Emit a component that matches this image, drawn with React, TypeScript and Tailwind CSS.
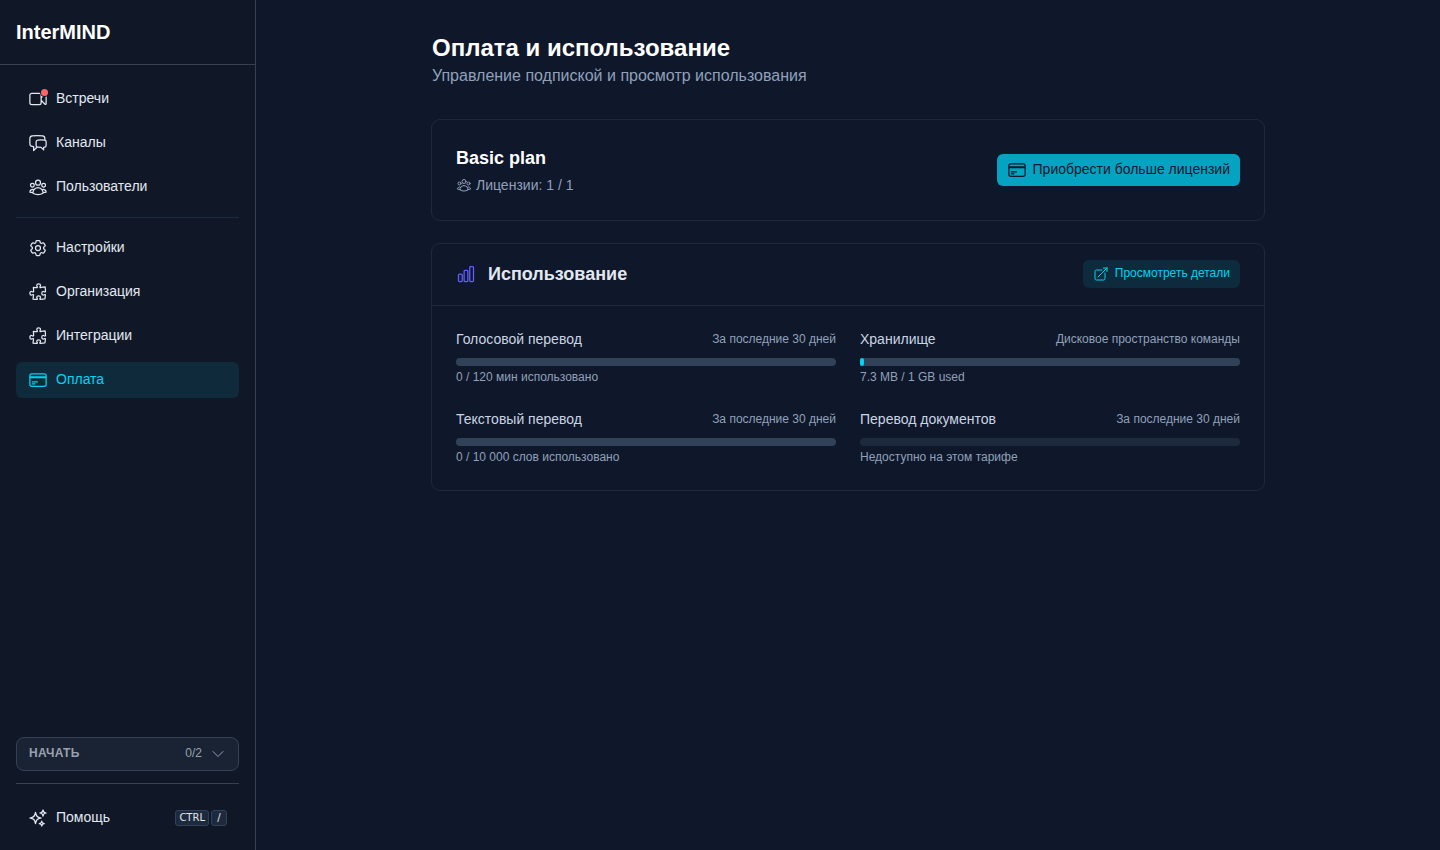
import type { ComponentType } from "react"
import clsx from "clsx"
import {
  HiOutlineArrowTopRightOnSquare,
  HiOutlineChartBar,
  HiOutlineChatBubbleLeftRight,
  HiOutlineChevronDown,
  HiOutlineCog6Tooth,
  HiOutlineCreditCard,
  HiOutlinePuzzlePiece,
  HiOutlineSparkles,
  HiOutlineUserGroup,
  HiOutlineVideoCamera,
} from "react-icons/hi2"

interface NavItem {
  label: string
  icon: ComponentType<{ className?: string }>
  active?: boolean
  dot?: boolean
}

interface Usage {
  title: string
  period: string
  note: string
  percent: number
  disabled?: boolean
}

const mainNav: NavItem[] = [
  { label: "Встречи", icon: HiOutlineVideoCamera, dot: true },
  { label: "Каналы", icon: HiOutlineChatBubbleLeftRight },
  { label: "Пользователи", icon: HiOutlineUserGroup },
]

const settingsNav: NavItem[] = [
  { label: "Настройки", icon: HiOutlineCog6Tooth },
  { label: "Организация", icon: HiOutlinePuzzlePiece },
  { label: "Интеграции", icon: HiOutlinePuzzlePiece },
  { label: "Оплата", icon: HiOutlineCreditCard, active: true },
]

const usage: Usage[] = [
  { title: "Голосовой перевод", period: "За последние 30 дней", note: "0 / 120 мин использовано", percent: 0 },
  { title: "Хранилище", period: "Дисковое пространство команды", note: "7.3 MB / 1 GB used", percent: 1 },
  { title: "Текстовый перевод", period: "За последние 30 дней", note: "0 / 10 000 слов использовано", percent: 0 },
  { title: "Перевод документов", period: "За последние 30 дней", note: "Недоступно на этом тарифе", percent: 0, disabled: true },
]

function NavList({ items }: { items: NavItem[] }) {
  return (
    <ul className="flex flex-col gap-2">
      {items.map(({ label, icon: Icon, active, dot }) => (
        <li key={label}>
          <a
            className={clsx(
              "flex h-9 items-center gap-2 rounded-md px-3 text-sm",
              active ? "bg-[#0e2a3b] text-cyan-400" : "text-slate-200"
            )}
          >
            <span className="relative">
              <Icon className="size-5" />
              {dot && <span className="absolute right-0 top-0 size-[7px] rounded-full bg-red-400 ring-1 ring-slate-900" />}
            </span>
            <span className="pb-0.5">{label}</span>
          </a>
        </li>
      ))}
    </ul>
  )
}

function Sidebar() {
  return (
    <aside className="flex w-64 shrink-0 flex-col border-r border-gray-700 bg-gray-900">
      <div className="flex h-[65px] items-center border-b border-gray-700 px-4">
        <span className="text-xl font-bold text-white">InterMIND</span>
      </div>

      <nav className="flex-1 px-4 pt-4">
        <NavList items={mainNav} />
        <div className="my-3 border-t border-slate-800" />
        <NavList items={settingsNav} />
      </nav>

      <div className="px-4">
        <button className="flex h-[34px] w-full items-center rounded-lg border border-gray-700 bg-[#192333] px-3 text-xs text-gray-400">
          <span className="pb-0.5 font-semibold tracking-wide">НАЧАТЬ</span>
          <span className="ml-auto mr-2 pb-0.5">0/2</span>
          <HiOutlineChevronDown className="size-4 text-slate-400" />
        </button>
        <div className="mt-3 border-t border-gray-700" />
        <div className="mb-3.5 mt-4 flex h-9 items-center gap-2 px-3 text-sm text-slate-200">
          <HiOutlineSparkles className="size-5" />
          <span className="pb-0.5">Помощь</span>
          <span className="ml-auto flex gap-0.5 font-['DejaVu_Sans'] text-[10px] leading-none">
            <kbd className="flex h-4 items-center rounded-[3px] border border-slate-700 bg-slate-800 px-[3px] font-[inherit]">CTRL</kbd>
            <kbd className="flex h-4 w-4 items-center justify-center rounded-[3px] border border-slate-700 bg-slate-800 font-[inherit]">/</kbd>
          </span>
        </div>
      </div>
    </aside>
  )
}

function UsageMeter({ title, period, note, percent, disabled }: Usage) {
  return (
    <div>
      <div className="flex h-5 items-center justify-between">
        <span className="text-sm text-slate-300">{title}</span>
        <span className="text-xs text-slate-400">{period}</span>
      </div>
      <div className={clsx("mt-[9px] h-2 rounded-full", disabled ? "bg-slate-800" : "bg-slate-700")}>
        <div className="h-full rounded-full bg-cyan-400" style={{ width: `${percent}%` }} />
      </div>
      <p className="mt-[3px] text-xs text-slate-400">{note}</p>
    </div>
  )
}

export default function App() {
  return (
    <div className="flex h-screen overflow-hidden bg-slate-900 font-['Liberation_Sans',sans-serif]">
      <Sidebar />

      <main className="flex-1">
        <div className="mx-auto w-[834px] pt-8">
          <header className="px-px">
            <h1 className="text-2xl font-bold text-white">Оплата и использование</h1>
            <p className="text-slate-400">Управление подпиской и просмотр использования</p>
          </header>

          <section className="mt-[31px] flex h-[102px] items-center justify-between rounded-[9px] border border-slate-800 px-6">
            <div>
              <h2 className="text-lg font-semibold text-white">Basic plan</h2>
              <p className="mt-1 flex h-5 items-center gap-1 pb-0.5 text-sm text-slate-400">
                <HiOutlineUserGroup className="size-4" />
                Лицензии: 1 / 1
              </p>
            </div>
            <button className="flex h-8 items-center gap-1.5 rounded-md bg-[#04a3c2] px-2.5 text-sm text-slate-900">
              <HiOutlineCreditCard className="size-5" />
              <span className="pb-0.5">Приобрести больше лицензий</span>
            </button>
          </section>

          <section className="mt-[22px] rounded-[9px] border border-slate-800">
            <div className="flex h-[62px] items-center border-b border-slate-800 px-6 pb-px">
              <HiOutlineChartBar className="size-5 text-indigo-500" />
              <h2 className="ml-3 text-lg font-semibold text-slate-200">Использование</h2>
              <button className="ml-auto flex h-7 items-center gap-1.5 rounded-md bg-[#0e2a3d] px-2.5 text-xs text-cyan-400">
                <HiOutlineArrowTopRightOnSquare className="size-4" />
                <span className="pb-0.5">Просмотреть детали</span>
              </button>
            </div>
            <div className="grid grid-cols-2 gap-6 px-6 pb-[25px] pt-[23px]">
              {usage.map((item) => (
                <UsageMeter key={item.title} {...item} />
              ))}
            </div>
          </section>
        </div>
      </main>
    </div>
  )
}
